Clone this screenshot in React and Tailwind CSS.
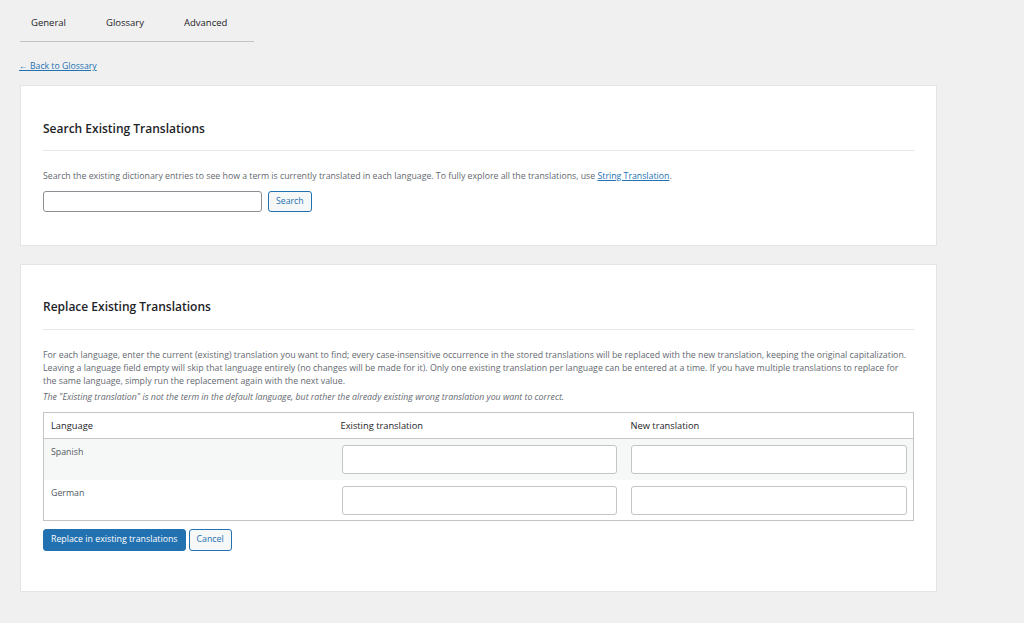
export default function App() {
  const rows = ['Spanish', 'German'];

  return (
    <div className="min-h-[623px] w-[1024px] bg-[#f0f0f1] font-['Open_Sans',sans-serif] text-[#3c434a]">
      <div className="pl-[20px] pr-[87px]">
        {/* tabs */}
        <nav className="flex w-[234px] h-[42px] items-end pb-[11px] border-b border-[#c3c4c7] text-[9.5px] leading-[14px] text-[#1d2327]">
          <span className="ml-[11px]">General</span>
          <span className="ml-[40px]">Glossary</span>
          <span className="ml-[40px]">Advanced</span>
        </nav>

        <a href="#" className="block mt-[17px] -ml-[1px] text-[8.7px] leading-[14px] text-[#2271b1] underline">
          ← Back to Glossary
        </a>

        {/* search card */}
        <section className="mt-[12px] h-[161px] bg-white border border-[#e2e4e7] px-[22px] pt-[35px]">
          <h2 className="text-[12px] font-semibold text-[#1d2327] leading-[16px]">Search Existing Translations</h2>
          <hr className="mt-[13px] border-[#e6e7e8]" />
          <p className="mt-[19px] text-[8.75px] leading-[13px] text-[#646970]">
            Search the existing dictionary entries to see how a term is currently translated in each language. To fully explore all the translations, use{' '}
            <a href="#" className="text-[#2271b1] underline">String Translation</a>.
          </p>
          <div className="mt-[8px] flex gap-[6px]">
            <input className="w-[219px] h-[21px] rounded-[3px] border border-[#8c8f94] bg-white" />
            <button className="h-[21px] px-[7px] rounded-[3px] border border-[#2271b1] bg-[#f6f7f7] text-[8.7px] text-[#2271b1]">Search</button>
          </div>
        </section>

        {/* replace card */}
        <section className="mt-[18px] h-[328px] bg-white border border-[#e2e4e7] px-[22px] pt-[34px]">
          <h2 className="text-[12px] font-semibold text-[#1d2327] leading-[16px]">Replace Existing Translations</h2>
          <hr className="mt-[14px] border-[#e6e7e8]" />
          <div className="mt-[19px] text-[8.8px] leading-[13px] text-[#646970]">
            <p>
              For each language, enter the current (existing) translation you want to find; every case-insensitive occurrence in the stored translations will be replaced with the new translation, keeping the original capitalization. Leaving a language field empty will skip that language entirely (no changes will be made for it). Only one existing translation per language can be entered at a time. If you have multiple translations to replace for the same language, simply run the replacement again with the next value.
            </p>
            <p className="italic mt-[3px]">
              The "Existing translation" is not the term in the default language, but rather the already existing wrong translation you want to correct.
            </p>
          </div>

          <table className="mt-[8px] w-full border border-[#c3c4c7] border-collapse text-[9.3px]">
            <thead>
              <tr className="h-[26px] border-b border-[#c3c4c7] text-[#1d2327]">
                <th className="w-[290px] pl-[7px] text-left font-normal">Language</th>
                <th className="w-[290px] pl-[7px] text-left font-normal">Existing translation</th>
                <th className="pl-[7px] text-left font-normal">New translation</th>
              </tr>
            </thead>
            <tbody>
              {rows.map((lang, i) => (
                <tr key={lang} className={i === 0 ? 'bg-[#f6f7f7]' : 'bg-white'}>
                  <td className="align-top pl-[7px] pt-[7px] h-[41px] text-[#50575e] text-[8.8px]">{lang}</td>
                  <td className="align-top pl-[8px] pr-[7px] pt-[6px]">
                    <input className="w-full h-[29px] rounded-[3px] border border-[#c3c4c7] bg-white" />
                  </td>
                  <td className="align-top pl-[7px] pr-[6px] pt-[6px]">
                    <input className="w-full h-[29px] rounded-[3px] border border-[#c3c4c7] bg-white" />
                  </td>
                </tr>
              ))}
            </tbody>
          </table>

          <div className="mt-[8px] flex gap-[3px]">
            <button className="h-[22px] px-[7px] rounded-[3px] bg-[#2271b1] border border-[#2271b1] text-white text-[8.8px]">Replace in existing translations</button>
            <button className="h-[22px] px-[7px] rounded-[3px] border border-[#2271b1] bg-[#f6f7f7] text-[#2271b1] text-[8.8px]">Cancel</button>
          </div>
        </section>
      </div>
    </div>
  );
}
